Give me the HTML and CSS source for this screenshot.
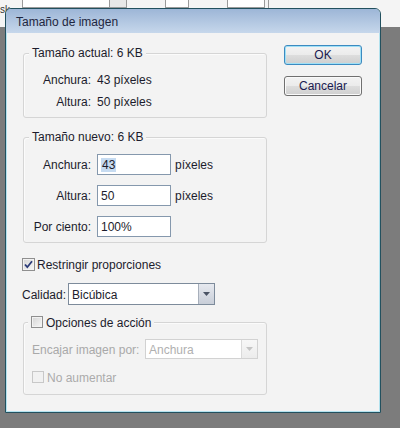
FILE: index.html
```html
<!DOCTYPE html>
<html lang="es">
<head>
<meta charset="utf-8">
<title>Tamaño de imagen</title>
<link rel="stylesheet" href="styles.css">
</head>
<body>
<div class="screen">
  <div class="toolbar">
    <span class="tb-text">sk</span>
    <span class="tb-field"></span>
    <span class="tb-btn"></span>
    <span class="tb-field tb-small"></span>
    <span class="tb-field tb-mid"></span>
    <span class="tb-line"></span>
  </div>

  <div class="dialog">
    <div class="titlebar">Tamaño de imagen</div>
    <div class="dlg-body">
      <div class="left">
        <div class="group g1">
          <div class="legend">Tamaño actual: 6 KB</div>
          <div class="info first"><span class="lbl">Anchura:</span><span class="val">43 píxeles</span></div>
          <div class="info"><span class="lbl">Altura:</span><span class="val">50 píxeles</span></div>
        </div>

        <div class="group g2">
          <div class="legend">Tamaño nuevo: 6 KB</div>
          <div class="field first"><span class="lbl">Anchura:</span><span class="input"><span class="sel">43</span></span><span class="unit">píxeles</span></div>
          <div class="field"><span class="lbl">Altura:</span><span class="input">50</span><span class="unit">píxeles</span></div>
          <div class="field"><span class="lbl">Por ciento:</span><span class="input">100%</span></div>
        </div>

        <div class="check-row">
          <span class="cb">
            <svg width="11" height="11" viewBox="0 0 11 11"><path d="M2 5.5 L4.3 8.2 L9 2.2" fill="none" stroke="#2a3a78" stroke-width="1.8"/></svg>
          </span>
          <span class="cb-text">Restringir proporciones</span>
        </div>

        <div class="quality-row">
          <span class="q-lbl">Calidad:</span>
          <div class="select q-select">
            <span class="sel-text">Bicúbica</span>
            <span class="sel-btn"><svg width="7" height="4" viewBox="0 0 7 4"><path d="M0 0 H7 L3.5 4 Z" fill="#4a5364"/></svg></span>
          </div>
        </div>

        <div class="group g3">
          <div class="legend legend-cb"><span class="cb small"></span><span class="cb-text">Opciones de acción</span></div>
          <div class="fit-row">
            <span class="fit-lbl">Encajar imagen por:</span>
            <div class="select dis">
              <span class="sel-text">Anchura</span>
              <span class="sel-btn"><svg width="7" height="4" viewBox="0 0 7 4"><path d="M0 0 H7 L3.5 4 Z" fill="#c4c4c4"/></svg></span>
            </div>
          </div>
          <div class="noinc-row"><span class="cb small dis"></span><span class="cb-text">No aumentar</span></div>
        </div>
      </div>

      <div class="right">
        <button class="btn default" type="button">OK</button>
        <button class="btn" type="button">Cancelar</button>
      </div>
    </div>
  </div>
</div>
</body>
</html>
```

FILE: styles.css
```css
html, body {
  margin: 0;
  padding: 0;
}

body {
  font-family: "Liberation Sans", Arial, sans-serif;
  font-size: 12px;
  color: #1c1c2c;
}

.screen {
  position: relative;
  width: 400px;
  height: 428px;
  overflow: hidden;
  background: #7c7c7c;
}

/* background app toolbar */
.toolbar {
  height: 27px;
  background: #f4f4f4;
  display: flex;
  align-items: flex-start;
}

.tb-text {
  font-size: 10px;
  line-height: 10px;
  margin: 5px 0 0 0;
  width: 22px;
  color: #333;
}

.tb-field {
  display: block;
  width: 86px;
  height: 7px;
  border: 1px solid #9a9a9a;
  border-top: none;
  background: #fff;
}

.tb-btn {
  display: block;
  width: 16px;
  height: 7px;
  border: 1px solid #9a9a9a;
  border-top: none;
  border-left: none;
  background: #e8e8e8;
}

.tb-small {
  width: 22px;
  margin-left: 38px;
}

.tb-mid {
  width: 36px;
  margin-left: 38px;
}

.tb-line {
  display: block;
  width: 1px;
  height: 8px;
  margin-left: 3px;
  background: #9a9a9a;
}

/* dialog window */
.dialog {
  position: absolute;
  left: 5px;
  top: 8px;
  width: 376px;
  height: 405px;
  box-sizing: border-box;
  border: 1px solid #22505e;
  border-radius: 6px 6px 0 0;
  background: #f3f3f3;
  box-shadow: inset 0 0 0 1px #b3e2ee;
  display: flex;
  flex-direction: column;
  overflow: hidden;
}

.titlebar {
  height: 24px;
  box-sizing: border-box;
  line-height: 24px;
  padding: 1px 0 0 10px;
  background: linear-gradient(#9db6d7, #c6d7eb);
  color: #1e2640;
  font-size: 12px;
}

.dlg-body {
  display: flex;
  padding-left: 16px;
}

.left {
  width: 245px;
  display: flex;
  flex-direction: column;
}

.right {
  margin-left: 17px;
  padding-top: 12px;
  display: flex;
  flex-direction: column;
  gap: 11px;
}

/* group boxes */
.group {
  margin-left: 1px;
  width: 244px;
  box-sizing: border-box;
  border: 1px solid #d5d5d5;
  border-radius: 3px;
  box-shadow: inset 1px 1px 0 #fbfbfb;
  display: flex;
  flex-direction: column;
}

.legend {
  align-self: flex-start;
  height: 14px;
  line-height: 14px;
  margin: -8px 0 0 5px;
  padding: 0 3px;
  background: #f3f3f3;
  white-space: nowrap;
}

.g1 {
  margin-top: 20px;
  padding-bottom: 5px;
}

.g2 {
  margin-top: 19px;
  padding-bottom: 5px;
}

.g3 {
  margin-top: 17px;
  padding-bottom: 10px;
}

.lbl {
  width: 67px;
  text-align: right;
  flex: none;
}

.info {
  display: flex;
  align-items: center;
  height: 22px;
  box-sizing: border-box;
  padding-top: 2px;
}

.info.first {
  margin-top: 8px;
}

.val {
  margin-left: 6px;
}

.field {
  display: flex;
  align-items: center;
  height: 21px;
  margin-top: 10px;
}

.input {
  margin-left: 6px;
  width: 74px;
  height: 21px;
  box-sizing: border-box;
  border: 1px solid #8598ad;
  background: #fff;
  padding: 1px 0 0 3px;
  display: flex;
  align-items: center;
}

.sel {
  background: #c6dbf1;
  padding: 0 1px;
  line-height: 14px;
}

.unit {
  margin-left: 4px;
}

/* checkboxes */
.check-row {
  display: flex;
  align-items: center;
  height: 15px;
  margin-top: 14px;
}

.cb {
  width: 13px;
  height: 13px;
  box-sizing: border-box;
  border: 1px solid #8f8f8f;
  background: linear-gradient(135deg, #d4d4d4, #f7f7f7);
  box-shadow: inset 0 0 0 1px #f2f2f2;
  display: flex;
  align-items: center;
  justify-content: center;
  flex: none;
}

.cb.small {
  width: 12px;
  height: 12px;
}

.cb.dis {
  border-color: #c8c8c8;
  background: #f1f1f1;
  box-shadow: none;
}

.cb-text {
  margin-left: 2px;
  padding-top: 1px;
}

/* quality select */
.quality-row {
  display: flex;
  align-items: center;
  height: 22px;
  margin-top: 11px;
}

.q-lbl {
  width: 46px;
  padding-top: 1px;
}

.select {
  height: 22px;
  box-sizing: border-box;
  border: 1px solid #7d8b9b;
  background: #fff;
  display: flex;
  align-items: center;
}

.q-select {
  width: 147px;
}

.sel-text {
  flex: 1;
  padding: 1px 0 0 3px;
}

.sel-btn {
  width: 16px;
  height: 100%;
  box-sizing: border-box;
  border-left: 1px solid #a7afbb;
  background: linear-gradient(#e6e9ef, #c8ced8);
  display: flex;
  align-items: center;
  justify-content: center;
}

/* action options group */
.legend-cb {
  display: flex;
  align-items: center;
  margin-left: 4px;
}

.legend-cb .cb-text {
  margin-left: 3px;
}

.fit-row {
  display: flex;
  align-items: center;
  height: 20px;
  margin-top: 10px;
  padding-left: 8px;
  color: #a9a9a9;
}

.fit-lbl {
  width: 113px;
  white-space: nowrap;
  padding-top: 1px;
}

.select.dis {
  width: 113px;
  height: 20px;
  border-color: #d2d2d2;
  color: #b0b0b0;
}

.select.dis .sel-btn {
  border-left-color: #dadada;
  background: linear-gradient(#f7f7f7, #ececec);
}

.noinc-row {
  display: flex;
  align-items: center;
  height: 14px;
  margin-top: 11px;
  padding-left: 8px;
  color: #ababab;
}

.noinc-row .cb-text {
  margin-left: 3px;
}

/* buttons */
.btn {
  width: 78px;
  height: 20px;
  padding: 0;
  box-sizing: border-box;
  border: 1px solid #707070;
  border-radius: 3px;
  background: linear-gradient(#f3f3f3 0%, #ebebeb 50%, #dddddd 51%, #cfcfcf 100%);
  box-shadow: inset 0 0 0 1px #fafafa;
  font-family: "Liberation Sans", Arial, sans-serif;
  font-size: 12px;
  color: #1a1a50;
  line-height: 18px;
}

.btn.default {
  border-color: #3c8ac0;
  box-shadow: inset 0 0 0 1px #9fe0f6;
}
```
